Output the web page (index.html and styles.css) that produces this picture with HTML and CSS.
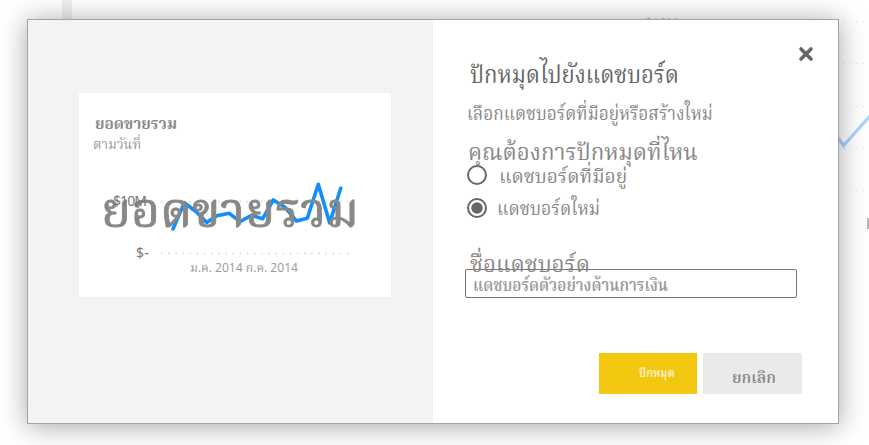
FILE: index.html
```html
<!DOCTYPE html>
<html lang="th">
<head>
<meta charset="utf-8">
<title>ปักหมุดไปยังแดชบอร์ด</title>
<link rel="stylesheet" href="styles.css">
</head>
<body>
<svg class="backdrop" width="869" height="445" viewBox="0 0 869 445" aria-hidden="true">
  <rect x="62" y="0" width="10" height="20" fill="#f0f0f0"/>
  <text x="645" y="27" class="back-label" textLength="33">$12M</text>
  <g class="back-grid">
    <path d="M843.5 21.5H869M843.5 63.5H869M843.5 106.5H869M843.5 148.5H869M843.5 190.5H869"/>
  </g>
  <path d="M836 135L843.5 145.5L870 116" fill="none" stroke="#a9d5ff" stroke-width="3.2"/>
  <path d="M868 218V229" stroke="#b5b5b5" stroke-width="2"/>
</svg>
<main class="dialog">
  <section class="preview">
    <article class="tile">
      <h2 class="tile-title"><span>ยอดขายรวม</span></h2>
      <p class="tile-sub"><span>ตามวันที่</span></p>
      <svg class="chart" width="312" height="144" viewBox="79 153 312 144">
        <path class="grid" d="M161 201.5H352M161 253.5H352"/>
        <path class="line" d="M173 229L184.3 202.7L196 211.5L206.7 222.5L216.7 215.7L229.3 213.3L240 221.7L251.5 215.3L262.7 218.7L273.3 200L285 207.3L296.5 221L307.3 218.3L318.3 184.3L329.7 223L340.7 188.3"/>
        <text class="big" x="101" y="227" textLength="258" lengthAdjust="spacingAndGlyphs">ยอดขายรวม</text>
        <text class="axis" x="113" y="206" textLength="34">$10M</text>
        <text class="axis" x="136" y="258" textLength="13">$-</text>
        <text class="dates" x="190" y="272" textLength="108" lengthAdjust="spacingAndGlyphs">ม.ค. 2014 ก.ค. 2014</text>
      </svg>
    </article>
  </section>
  <section class="form">
    <button class="close" aria-label="ปิด"><svg width="16" height="16" viewBox="0 0 16 16"><path d="M3 3L13 13M13 3L3 13"/></svg></button>
    <h1 class="heading"><span>ปักหมุดไปยังแดชบอร์ด</span></h1>
    <p class="lead"><span>เลือกแดชบอร์ดที่มีอยู่หรือสร้างใหม่</span></p>
    <h2 class="question"><span>คุณต้องการปักหมุดที่ไหน</span></h2>
    <div class="option"><i class="radio"></i><span class="opt-a">แดชบอร์ดที่มีอยู่</span></div>
    <div class="option second"><i class="radio on"></i><span class="opt-b">แดชบอร์ดใหม่</span></div>
    <h2 class="name-label"><span>ชื่อแดชบอร์ด</span></h2>
    <div class="field"><span>แดชบอร์ดตัวอย่างด้านการเงิน</span></div>
    <div class="actions">
      <button class="pin"><span>ปักหมุด</span></button>
      <button class="cancel"><span>ยกเลิก</span></button>
    </div>
  </section>
</main>
</body>
</html>
```

FILE: styles.css
```css
* { box-sizing: border-box; }
body { margin: 0; width: 869px; height: 445px; overflow: hidden; background: #fff; font-family: "Angsana New", "Norasi", "Kinnari", "Noto Serif Thai", "Noto Sans Thai", "Liberation Serif", serif; color: #777; }
h1, h2, p { margin: 0; font-weight: 400; white-space: nowrap; }
span { display: inline-block; transform-origin: 0 50%; white-space: nowrap; }
button { border: 0; padding: 0; font-family: inherit; }
.backdrop { position: absolute; left: 0; top: 0; }
.back-label { font: 13px "Noto Sans", sans-serif; fill: #ccc; }
.back-grid { stroke: #e4e4e4; stroke-dasharray: 1.5 5; }
.dialog { position: relative; display: flex; width: 812px; height: 405px; margin: 19px 0 0 27px; border: 1px solid #a3a3a3; box-shadow: 0 2px 26px rgba(0,0,0,.36); background: #fff; }
.preview { width: 405px; background: #f3f3f3; padding: 73px 0 0 51px; }
.tile { width: 312px; height: 204px; background: #fff; padding-top: 21px; }
.tile-title { height: 21px; line-height: 22px; padding-left: 16px; font-size: 15px; font-weight: 700; color: #888; }
.tile-title span { transform: scaleX(1.023); }
.tile-sub { height: 18px; line-height: 20px; padding-left: 14px; font-size: 14px; color: #999; }
.tile-sub span { transform: scaleX(.95); }
.chart { display: block; }
.grid { stroke: #d4d4d4; stroke-width: 1.3; stroke-dasharray: 1.5 5.65; }
.axis { font: 14px "Noto Sans", sans-serif; fill: #777; }
.line { fill: none; stroke: #118dff; stroke-width: 3.6; stroke-linejoin: round; stroke-linecap: round; }
.big { font-size: 48px; fill: #888886; stroke: #888886; stroke-width: .8; }
.dates { font-family: "Open Sans", "Noto Serif Thai", "Norasi", serif; font-size: 12.5px; fill: #999; }
.form { position: relative; flex: 1; padding: 39px 0 0 32px; }
.close { position: absolute; left: 365px; top: 26px; width: 16px; height: 16px; background: none; }
.close svg { display: block; }
.close path { stroke: #666; stroke-width: 3.6; stroke-linecap: round; }
.heading { height: 31px; line-height: 35px; padding-left: 5px; font-size: 24px; color: #666; }
.heading span { transform: scaleX(.921); }
.lead { height: 40px; line-height: 50px; padding-left: 2px; font-size: 19px; color: #888; }
.lead span { transform: scaleX(.906); }
.question { height: 34px; line-height: 48px; padding-left: 3px; font-size: 23px; color: #888; }
.question span { transform: scaleX(.968); }
.option { display: flex; align-items: center; height: 22px; gap: 12px; padding-left: 2px; font-size: 20px; color: #888; }
.opt-a { padding-top: 5px; transform: scaleX(.956); }
.opt-b { padding-top: 4px; transform: scaleX(.88); }
.second { margin-top: 11px; gap: 10px; }
.radio { display: block; width: 20px; height: 20px; border: 2px solid #666; border-radius: 50%; background: #fff; }
.radio.on { background: radial-gradient(circle, #666 5.3px, transparent 6px); }
.name-label { height: 49px; line-height: 94px; padding-left: 5px; font-size: 23px; color: #888; }
.name-label span { transform: scaleX(.97); }
.field { width: 332px; height: 29px; margin-top: 1px; border: 1px solid #777; border-radius: 2px; line-height: 34px; padding-left: 7px; font-size: 17px; font-weight: 600; color: #999; }
.field span { transform: scaleX(.9); }
.actions { display: flex; gap: 6px; margin: 55px 0 0 134px; }
.pin { width: 98px; height: 41px; background: #f2c811; color: #fff; font-size: 12px; text-align: left; padding-left: 40px; }
.pin span { transform: scaleX(.94); }
.cancel { width: 99px; height: 41px; background: #eaeaea; color: #888; font-size: 16px; font-weight: 600; text-align: left; padding: 10px 0 0 29px; }
.cancel span { transform: scaleX(.97); }
```
